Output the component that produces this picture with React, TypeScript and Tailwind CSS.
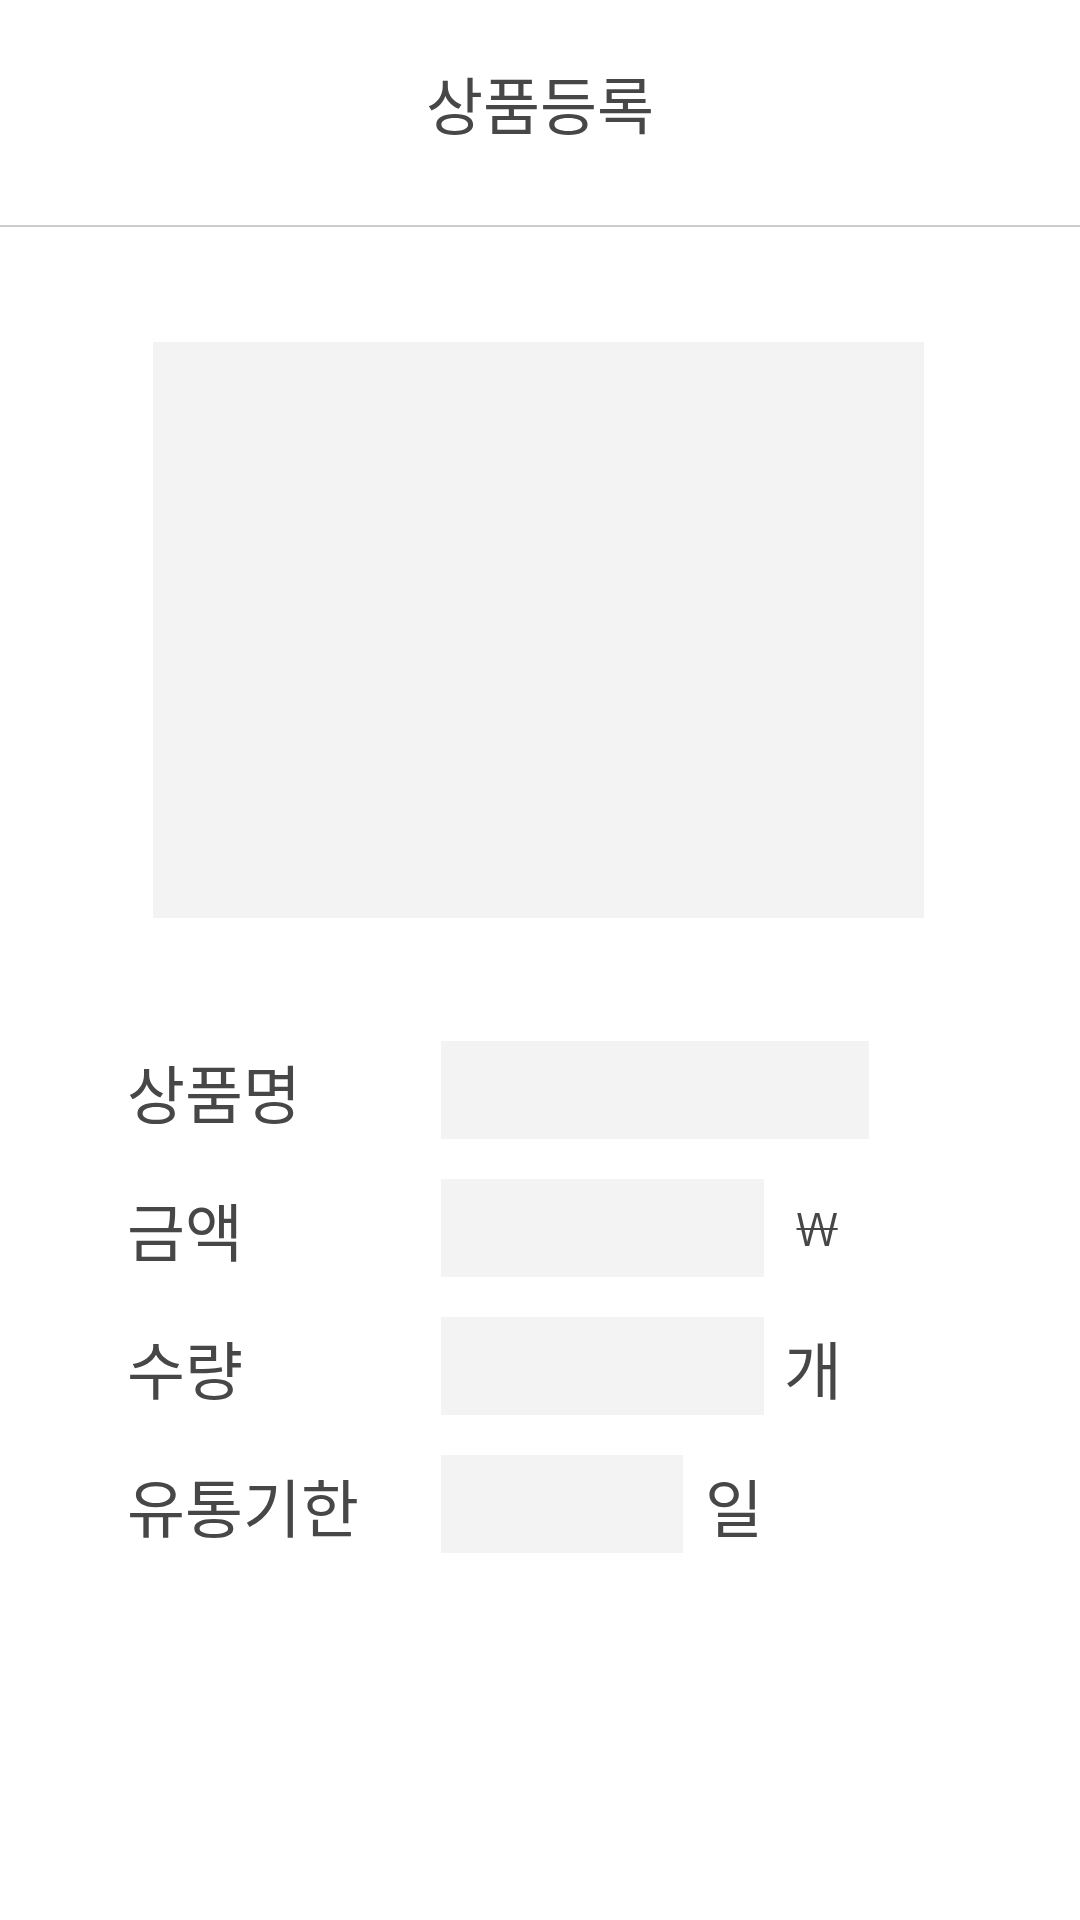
import React from 'react'

const FONT = { fontFamily: '"Noto Sans CJK KR", "Noto Sans", sans-serif' }

type Field = {
  label: string
  width: string
  unit?: string
  unitClass?: string
}

const FIELDS: Field[] = [
  { label: '상품명', width: 'w-[428px]' },
  {
    label: '금액',
    width: 'w-[323px]',
    unit: '₩',
    unitClass: 'ml-[32px] inline-block origin-left scale-x-[1.45] font-["Noto_Sans",sans-serif] text-[46px] font-light',
  },
  { label: '수량', width: 'w-[323px]', unit: '개', unitClass: 'ml-[20px] text-[63px]' },
  { label: '유통기한', width: 'w-[242px]', unit: '일', unitClass: 'ml-[22px] text-[63px]' },
]

function FormRow({ field }: { field: Field }) {
  return (
    <div className="flex items-center">
      <label className="w-[314px] text-[63px] leading-none">{field.label}</label>
      <input
        type="text"
        aria-label={field.label}
        className={`h-[98px] ${field.width} border-0 bg-[#f3f3f3] px-4 text-[40px] outline-none`}
      />
      {field.unit ? <span className={`${field.unitClass} leading-none`}>{field.unit}</span> : null}
    </div>
  )
}

export default function App() {
  return (
    <div className="min-h-[1920px] w-full bg-white text-[#474747]" style={FONT}>
      <header className="flex h-[227px] items-center justify-center border-b-2 border-[#cccccc] pb-[20px]">
        <h1 className="text-[62px] leading-none">상품등록</h1>
      </header>

      <div className="mt-[115px] ml-[153px] h-[576px] w-[771px] bg-[#f3f3f3]" />

      <form className="mt-[123px] flex flex-col gap-[40px] pl-[127px]">
        {FIELDS.map((f) => (
          <FormRow key={f.label} field={f} />
        ))}
      </form>
    </div>
  )
}
